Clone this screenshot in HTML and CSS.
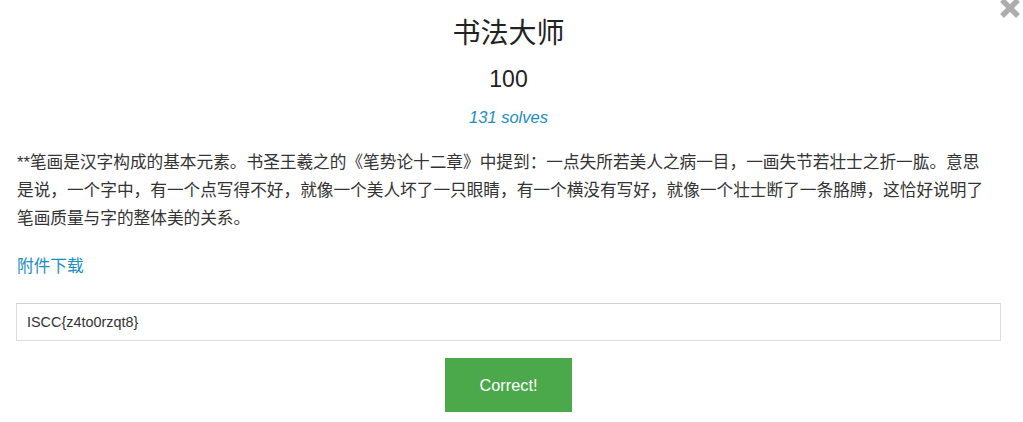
FILE: index.html
```html
<!DOCTYPE html>
<html lang="zh-CN">
<head>
    <meta charset="UTF-8">
    <meta name="viewport" content="width=device-width, initial-scale=1.0">
    <title>书法大师</title>
    <link rel="stylesheet" href="styles.css">
</head>
<body>
    <div class="modal">
        <!-- Botão de fechar -->
        <button class="close" aria-label="Close">
            <svg width="22" height="20" viewBox="0 0 22 20">
                <path d="M3 1 L19 17 M19 1 L3 17" stroke="#adadad" stroke-width="5.5" fill="none"/>
            </svg>
        </button>

        <h3 class="challenge-name">书法大师</h3>
        <h4 class="challenge-value">100</h4>
        <div class="challenge-solves"><a href="#">131 solves</a></div>

        <div class="challenge-desc">
            <p>**笔画是汉字构成的基本元素。书圣王羲之的《笔势论十二章》中提到：一点失所若美人之病一目，一画失节若壮士之折一肱。意思是说，一个字中，有一个点写得不好，就像一个美人坏了一只眼睛，有一个横没有写好，就像一个壮士断了一条胳膊，这恰好说明了笔画质量与字的整体美的关系。</p>
            <p class="files"><a href="#">附件下载</a></p>
        </div>

        <input type="text" class="answer" value="ISCC{z4to0rzqt8}">
        <div class="submit-row">
            <button class="submit">Correct!</button>
        </div>
    </div>
</body>
</html>
```

FILE: styles.css
```css
/* Estilo básico da página */
body {
    margin: 0;
    background: #fff;
    font-family: "Liberation Sans", "Noto Sans CJK SC", sans-serif;
    color: #333;
}

.modal {
    position: relative;
    padding: 17px 22px 0 16px;
}

/* Botão de fechar */
.close {
    position: absolute;
    top: -1px;
    right: 2px;
    padding: 0;
    border: none;
    background: none;
    line-height: 0;
    cursor: pointer;
}

.challenge-name {
    margin: 0;
    text-align: center;
    font-size: 28px;
    font-weight: normal;
    line-height: 34px;
    color: #222;
}

.challenge-value {
    margin: 13px 0 0;
    text-align: center;
    font-size: 23px;
    font-weight: normal;
    line-height: 30px;
    color: #222;
}

.challenge-solves {
    margin-top: 11px;
    text-align: center;
    font-size: 16.5px;
    font-style: italic;
    line-height: 24px;
}

a {
    color: #1b8dc1;
    text-decoration: none;
}

.challenge-desc {
    margin-top: 20px;
    padding: 0 11px 0 1px;
    font-size: 16.67px;
    line-height: 28px;
    color: #333;
}

.challenge-desc p {
    margin: 0;
}

.challenge-desc .files {
    margin-top: 20px;
}

/* Campo da resposta */
.answer {
    display: block;
    box-sizing: border-box;
    width: 100%;
    height: 38px;
    margin-top: 22px;
    padding: 0 10px;
    border: 1px solid #ddd;
    border-top-color: #d2d2d2;
    font-family: "Liberation Sans", sans-serif;
    font-size: 14.4px;
    color: #333;
    outline: none;
}

.submit-row {
    margin-top: 17px;
    text-align: center;
}

.submit {
    width: 127px;
    height: 54px;
    border: none;
    background-color: #4ba84b;
    color: #fff;
    font-family: "Liberation Sans", sans-serif;
    font-size: 16.3px;
    cursor: pointer;
}
```
